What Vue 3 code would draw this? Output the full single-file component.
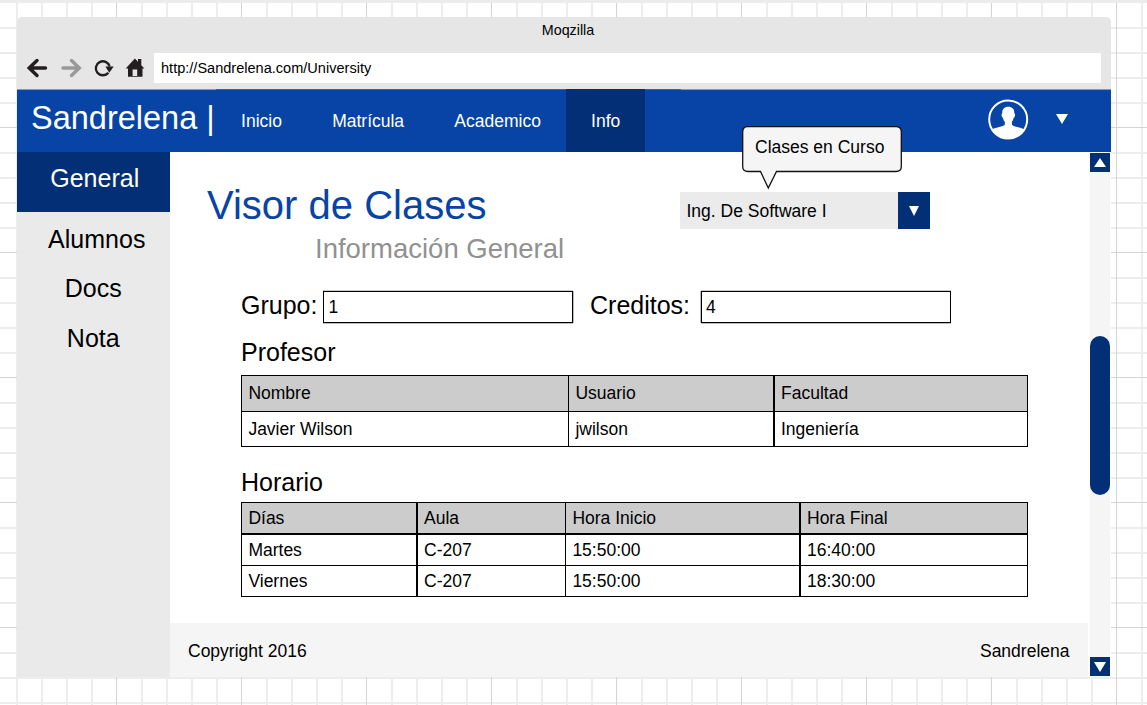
<script setup>
const navItems = ['Inicio', 'Matrícula', 'Academico', 'Info']
const sideItems = ['Alumnos', 'Docs', 'Nota']
const profesor = [
  ['Nombre', 'Usuario', 'Facultad'],
  ['Javier Wilson', 'jwilson', 'Ingeniería'],
]
const horario = [
  ['Días', 'Aula', 'Hora Inicio', 'Hora Final'],
  ['Martes', 'C-207', '15:50:00', '16:40:00'],
  ['Viernes', 'C-207', '15:50:00', '18:30:00'],
]
</script>

<template>
  <div class="canvas">
    <svg class="paper" width="1147" height="705">
      <defs>
        <pattern id="grid" x="0" y="2" width="125" height="125" patternUnits="userSpaceOnUse">
          <path d="M17 0V125M42 0V125M67 0V125M92 0V125" class="minor" />
          <path d="M0 26H125M0 51H125M0 76H125M0 101H125" class="minor" />
          <path d="M116.5 0V125M0 .5H125" class="major" />
        </pattern>
      </defs>
      <rect y="3" width="1147" height="702" fill="url(#grid)" />
    </svg>
    <div class="browser">
      <header class="chrome">
        <div class="window-title">Moqzilla</div>
        <div class="toolbar">
          <svg class="tools" width="137" height="30" viewBox="17 53 137 30">
            <path class="arrow" d="M45.5 68H30M37 60.5L29.2 68L37 75.500" />
            <path class="arrow off" d="M63 68H78.500M71.500 60.5L79.300 68L71.500 75.500" />
            <path class="reload" d="M108.300 72.700A7 7 0 1 1 109.600 66.500" />
            <path class="solid" d="M105.400 66.400H113.700L109.300 72.700Z" />
            <path class="solid" fill-rule="evenodd" d="M125.700 68.400L134.900 58.600L138 61.700V59H141.300V65.200L144.400 68.400H142.500V76.800H128V68.400ZM132.600 69.400V76H137.200V69.400Z" />
          </svg>
          <div class="url">http://Sandrelena.com/University</div>
        </div>
      </header>
      <nav class="navbar">
        <div class="brand">Sandrelena |</div>
        <div class="links">
          <a v-for="item in navItems" :key="item" :class="{ active: item === 'Info' }">{{ item }}</a>
        </div>
        <div class="account">
          <svg width="42" height="42" viewBox="987 98 42 42">
            <circle cx="1008.200" cy="119.500" r="19" fill="none" stroke="#fff" stroke-width="2" />
            <path fill="#fff" d="M1008.300 106.800C1012.600 106.800 1014.600 109.500 1014.300 113.600C1015.600 113.700 1015 117.300 1013.700 117.700C1013.300 119.600 1012.600 120.900 1011.900 121.700V124.800C1013.800 127 1020 127 1024.350 129.500A19 19 0 0 1 992.050 129.500C996.400 127 1002.900 127 1004.800 124.800V121.700C1003.900 120.900 1003.300 119.600 1002.900 117.700C1001.600 117.300 1001 113.700 1002.300 113.600C1002 109.500 1004 106.800 1008.300 106.800Z" />
          </svg>
          <svg class="caret" width="12" height="10" viewBox="0 0 12 10"><path d="M0 0H12L6 10Z" fill="#fff" /></svg>
        </div>
      </nav>
      <div class="body">
        <aside class="sidebar">
          <div class="current">General</div>
          <div v-for="item in sideItems" :key="item" class="side-item" :class="item.toLowerCase()">{{ item }}</div>
        </aside>
        <main class="main">
          <section class="content">
            <div class="heading">
              <div class="titles">
                <h1>Visor de Clases</h1>
                <h2>Información General</h2>
              </div>
              <div class="select">
                <span>Ing. De Software I</span>
                <b><svg width="10" height="10" viewBox="0 0 10 10"><path d="M0 0H10L5 10Z" fill="#fff" /></svg></b>
                <div class="callout">
                  <svg width="160" height="64" viewBox="0 0 160 64">
                    <path d="M5.500 .7H154Q159.300 .7 159.300 6V40.500Q159.300 45.500 154 45.500H34.500L26.300 62L18.500 45.500H6Q.7 45.500 .7 40.500V6Q.7 .7 5.500 .7Z" />
                  </svg>
                  <span>Clases en Curso</span>
                </div>
              </div>
            </div>
            <div class="fields">
              <label>Grupo:</label>
              <div class="input first">1</div>
              <label class="second-label">Creditos:</label>
              <div class="input second">4</div>
            </div>
            <h3>Profesor</h3>
            <div class="table profesor">
              <template v-for="(row, r) in profesor" :key="r">
                <div v-for="(cell, c) in row" :key="c" :class="['cell', 'c' + c, 'r' + r]">{{ cell }}</div>
              </template>
            </div>
            <h3 class="h-horario">Horario</h3>
            <div class="table horario">
              <template v-for="(row, r) in horario" :key="r">
                <div v-for="(cell, c) in row" :key="c" :class="['cell', 'c' + c, 'r' + r]">{{ cell }}</div>
              </template>
            </div>
          </section>
          <footer class="footer"><span>Copyright 2016</span><span>Sandrelena</span></footer>
        </main>
        <div class="scroll">
          <div class="btn up"><svg width="12" height="9" viewBox="0 0 12 9"><path d="M0 9H12L6 0Z" fill="#fff" /></svg></div>
          <div class="thumb"></div>
          <div class="btn down"><svg width="12" height="10" viewBox="0 0 12 10"><path d="M0 0H12L6 10Z" fill="#fff" /></svg></div>
        </div>
      </div>
    </div>
  </div>
</template>

<style>
body { background: #fff; overflow: hidden; }
</style>

<style scoped>
* { box-sizing: border-box; }
.canvas {
  position: relative;
  width: 1147px;
  height: 705px;
  padding: 14px 0 0 17px;
  border-top: 3px solid #ececec;
  overflow: hidden;
  font: 17.5px/20px "Liberation Sans", Arial, sans-serif;
  color: #000;
  white-space: nowrap;
}
.paper { position: absolute; left: 0; top: -3px; }
.minor { stroke: #ededed; stroke-width: 2; }
.major { stroke: #d4d4d4; stroke-width: 1; }
.browser {
  position: relative;
  width: 1094px;
  height: 660px;
  background: #fff;
  border-radius: 5px 5px 0 0;
  overflow: hidden;
}
.chrome { height: 72px; background: #e6e6e6; }
.window-title { height: 36px; padding: 3px 0 0 8px; text-align: center; font-size: 14.3px; line-height: 20px; }
.toolbar { display: flex; padding-right: 10px; }
.tools { flex: none; }
.arrow { fill: none; stroke: #231f20; stroke-width: 3.4; stroke-linecap: round; }
.arrow.off { stroke: #999; }
.reload { fill: none; stroke: #231f20; stroke-width: 2.4; }
.solid { fill: #231f20; }
.url { flex: 1; height: 30px; padding-left: 7px; background: #fff; font-size: 14.55px; line-height: 30px; }
.navbar { display: flex; height: 63px; background: #0744a6; border-top: 1px solid #7e9bce; color: #fff; }
.brand { width: 199px; padding-left: 14px; font-size: 32.5px; line-height: 56px; }
.links { display: flex; width: 465px; margin-top: -1px; border-top: 1px solid #2f62b4; }
.links a { padding: 0 25.100px; line-height: 63px; }
.links a.active { background: #032f77; margin-top: -1px; padding-top: 1px; }
.account { display: flex; align-items: center; height: 58px; margin-left: 306px; }
.account svg { display: block; }
.account .caret { margin-left: 27px; }
.body { display: flex; height: 525px; }
.sidebar { width: 152.500px; background: #eaeaea; text-align: center; font-size: 25px; }
.current { height: 60px; padding-left: 3px; background: #032f77; color: #fff; line-height: 53px; }
.side-item { height: 49.300px; line-height: 54px; }
.alumnos { padding-left: 7px; }
.main { width: 918.500px; margin-right: 1.500px; display: flex; flex-direction: column; }
.content { height: 471px; padding-left: 71.500px; }
.heading { display: flex; height: 124px; }
.titles { width: 438.500px; padding-top: 31px; }
h1, h2, h3 { margin: 0; font-weight: 400; }
h1 { margin-left: -34px; font-size: 40px; line-height: 44px; color: #0744a6; }
h2 { margin: 6px 0 0 74px; font-size: 27.5px; line-height: 32px; color: #919191; }
.select { position: relative; display: flex; width: 250px; height: 37px; margin-top: 40px; background: #ebebeb; line-height: 38px; }
.select span { flex: 1; padding-left: 7px; }
.select b { display: flex; align-items: center; justify-content: center; width: 31.500px; background: #032f77; }
.callout { position: absolute; left: 62.500px; top: -66px; width: 160px; height: 64px; }
.callout svg { display: block; }
.callout path { fill: #f5f5f5; stroke: #111; stroke-width: 1.3; }
.callout span { position: absolute; left: 6px; top: 2px; }
.fields { display: flex; height: 60px; padding-top: 15px; }
.fields label { width: 82px; font-size: 25px; line-height: 29px; }
.fields .second-label { width: 111px; margin-left: 17px; }
.input { width: 250px; height: 32px; padding-left: 4px; border: 1px solid #000; line-height: 30px; }
.first { padding-left: 4.500px; box-shadow: 1px 0 #bbb, 0 -1px #ccc, 0 1px #bbb; }
.second { box-shadow: -1px 0 #bbb, 0 -1px #ccc, 0 1px #bbb; }
h3 { height: 39px; font-size: 25px; line-height: 33px; }
.h-horario { height: 37px; margin-top: 18px; line-height: 35px; }
.table { display: grid; width: 787px; border: solid #000; border-width: 0 1px 1px 0; }
.profesor { grid-template: 36px 35px / 327px 205px 254px; }
.horario { grid-template: 31px 32px 31px / 175px 149px 234px 228px; }
.cell { border: solid #000; border-width: 1px 0 0 1px; padding-left: 6.400px; line-height: 35px; }
.horario .cell { line-height: 31px; }
.profesor .c2, .horario .c1, .horario .c3 { border-left-width: 2px; padding-left: 6px; }
.horario .r1 { border-top-width: 2px; }
.r0 { background: #ccc; }
.footer { display: flex; justify-content: space-between; height: 54px; padding: 0 18.500px; background: #f5f5f5; line-height: 56px; }
.scroll { display: flex; flex-direction: column; align-items: center; width: 20px; padding-top: 1px; background: #f5f5f5; }
.btn { display: flex; align-items: center; justify-content: center; width: 20px; height: 19px; background: #032f77; }
.thumb { width: 20px; height: 159px; margin: 164px 0 162px; border-radius: 10px; background: #032f77; }
</style>
